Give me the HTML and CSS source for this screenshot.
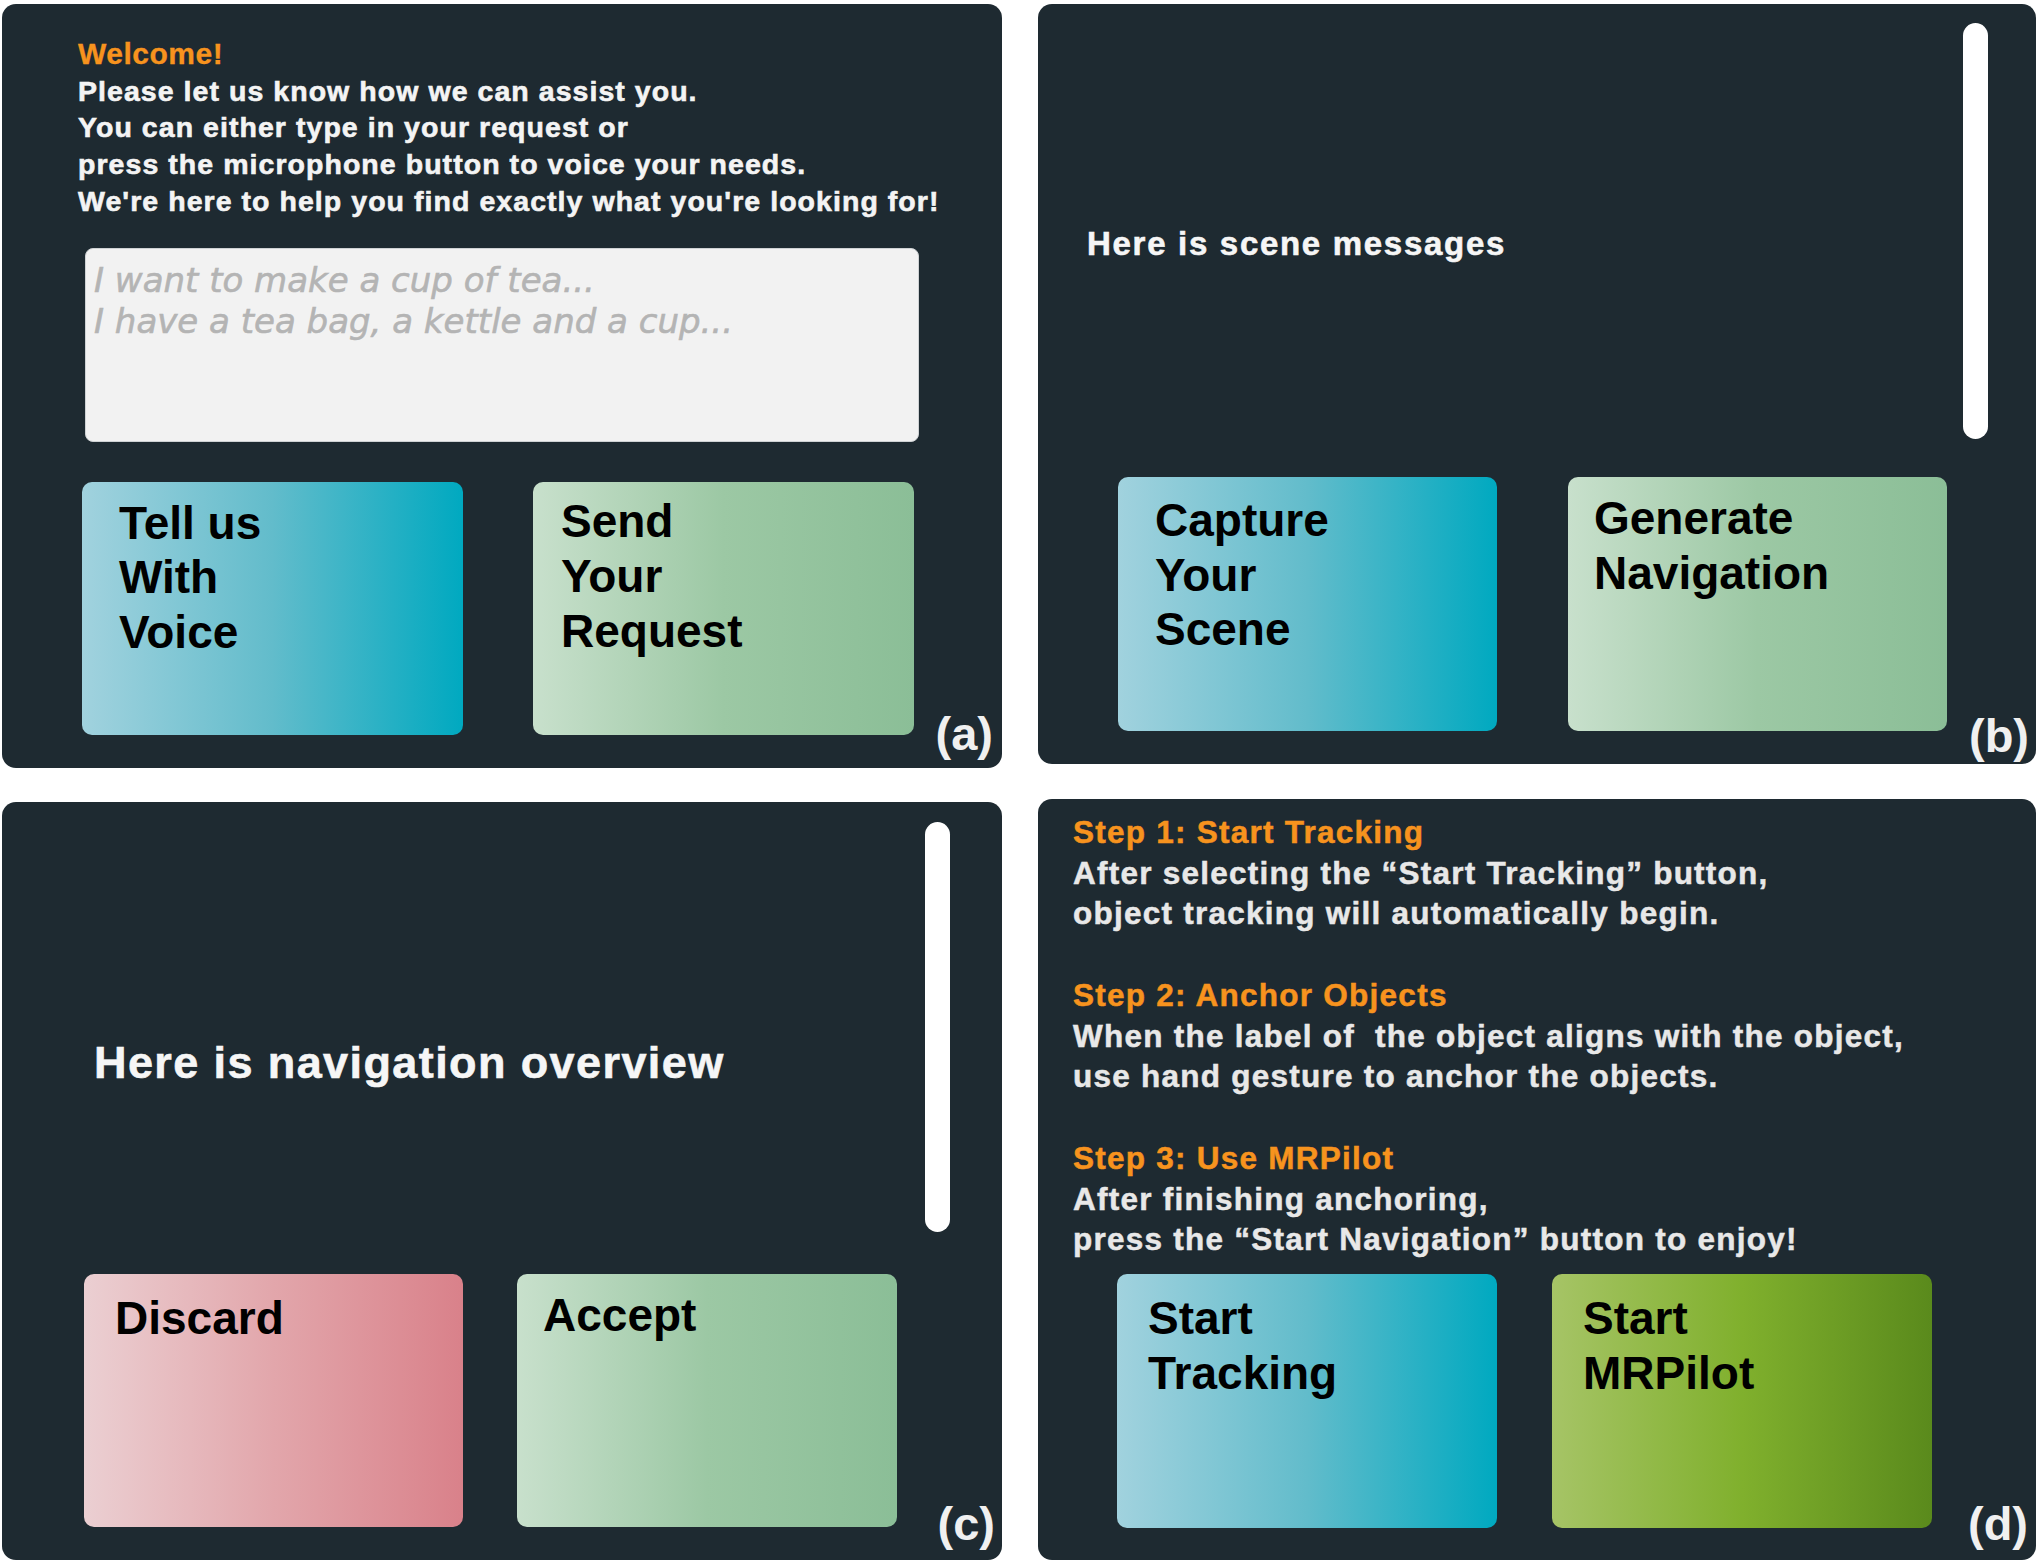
FILE: index.html
```html
<!DOCTYPE html>
<html lang="en">
<head>
<meta charset="utf-8">
<title>MRPilot panels</title>
<link rel="stylesheet" href="styles.css">
</head>
<body>
<div class="board">
  <div class="col col-left">
    <section class="panel panel-a">
      <div class="welcome">Welcome!</div>
      <div class="intro">Please let us know how we can assist you.<br>You can either type in your request or<br>press the microphone button to voice your needs.<br>We're here to help you find exactly what you're looking for!</div>
      <div class="request-box">
        <div class="placeholder">I want to make a cup of tea...<br>I have a tea bag, a kettle and a cup...</div>
      </div>
      <div class="btn-row row-a">
        <div class="btn btn-cyan voice">Tell us<br>With<br>Voice</div>
        <div class="btn btn-mint send">Send<br>Your<br>Request</div>
      </div>
      <span class="tag tag-a">(a)</span>
    </section>
    <section class="panel panel-c">
      <div class="top-row top-c">
        <div class="message msg-c">Here is navigation overview</div>
        <div class="scrollbar"></div>
      </div>
      <div class="btn-row row-c">
        <div class="btn btn-rose discard">Discard</div>
        <div class="btn btn-mint accept">Accept</div>
      </div>
      <span class="tag tag-c">(c)</span>
    </section>
  </div>
  <div class="col col-right">
    <section class="panel panel-b">
      <div class="top-row top-b">
        <div class="message msg-b">Here is scene messages</div>
        <div class="scrollbar"></div>
      </div>
      <div class="btn-row row-b">
        <div class="btn btn-cyan capture">Capture<br>Your<br>Scene</div>
        <div class="btn btn-mint generate">Generate<br>Navigation</div>
      </div>
      <span class="tag tag-b">(b)</span>
    </section>
    <section class="panel panel-d">
      <div class="steps">
        <div class="step-title">Step 1: Start Tracking</div>
        <div class="step-text">After selecting the “Start Tracking” button,<br>object tracking will automatically begin.</div>
        <div class="step-gap"></div>
        <div class="step-title">Step 2: Anchor Objects</div>
        <div class="step-text">When the label of&nbsp; the object aligns with the object,<br>use hand gesture to anchor the objects.</div>
        <div class="step-gap"></div>
        <div class="step-title">Step 3: Use MRPilot</div>
        <div class="step-text">After finishing anchoring,<br>press the “Start Navigation” button to enjoy!</div>
      </div>
      <div class="btn-row row-d">
        <div class="btn btn-cyan tracking">Start<br>Tracking</div>
        <div class="btn btn-olive pilot">Start<br>MRPilot</div>
      </div>
      <span class="tag tag-d">(d)</span>
    </section>
  </div>
</div>
</body>
</html>
```

FILE: styles.css
```css
html, body {
  margin: 0;
  padding: 0;
  background: #ffffff;
}

body {
  font-family: "Liberation Sans", Arial, sans-serif;
}

.board {
  display: flex;
  gap: 36px;
  padding: 4px 0 0 2px;
}

.col {
  display: flex;
  flex-direction: column;
}

.col-left {
  width: 1000px;
  gap: 34px;
}

.col-right {
  width: 998px;
  gap: 35px;
}

.panel {
  position: relative;
  background: #1e2a31;
  border-radius: 14px;
  box-sizing: border-box;
  overflow: hidden;
}

.panel-a { height: 764px; padding-top: 32px; }
.panel-c { height: 758px; padding-top: 20px; }
.panel-b { height: 760px; padding-top: 19px; }
.panel-d { height: 761px; padding-top: 13px; }

/* ---------- panel (a) ---------- */
.welcome {
  margin-left: 76px;
  font-size: 30px;
  line-height: 36.7px;
  font-weight: bold;
  letter-spacing: 0.5px;
  color: #f7931e;
  -webkit-text-stroke: 0.3px #f7931e;
}

.intro {
  margin-left: 76px;
  font-size: 28.5px;
  line-height: 36.7px;
  font-weight: bold;
  letter-spacing: 1.05px;
  color: #f4f4f4;
  -webkit-text-stroke: 0.6px #f4f4f4;
  white-space: nowrap;
}

.request-box {
  margin: 28px 0 0 83px;
  width: 834px;
  height: 194px;
  box-sizing: border-box;
  padding: 11px 8px;
  background: #f2f2f2;
  border: 1px solid #cfd2d4;
  border-radius: 8px;
}

.placeholder {
  font-family: "DejaVu Sans", "Liberation Sans", sans-serif;
  font-style: oblique;
  font-size: 34px;
  line-height: 41.5px;
  color: #b4b4b4;
  -webkit-text-stroke: 0.6px #b4b4b4;
  white-space: nowrap;
}

/* ---------- buttons ---------- */
.btn-row {
  display: flex;
}

.btn {
  box-sizing: border-box;
  border-radius: 10px;
  font-size: 46px;
  font-weight: bold;
  line-height: 54.5px;
  color: #000000;
  white-space: nowrap;
}

.btn-cyan  { background: linear-gradient(90deg, #a1d2de 0%, #62bccb 50%, #00a9c0 100%); }
.btn-mint  { background: linear-gradient(90deg, #c8e0cc 0%, #9cc8a4 50%, #8bbe97 100%); }
.btn-rose  { background: linear-gradient(90deg, #ebcfd2 0%, #e2a6ab 50%, #d9818a 100%); }
.btn-olive { background: linear-gradient(90deg, #a6c466 0%, #80b02d 50%, #5a8a1c 100%); }

.row-a { margin: 40px 0 0 80px; gap: 70px; }
.row-a .btn { height: 253px; width: 381px; }
.voice { padding: 14px 0 0 37px; }
.send { padding: 12px 0 0 28px; line-height: 55px; }

.row-b { margin: 38px 0 0 80px; gap: 71px; }
.row-b .btn { height: 254px; width: 379px; }
.capture { padding: 16px 0 0 37px; }
.generate { padding: 14px 0 0 26px; line-height: 55px; }

.row-c { margin: 42px 0 0 82px; gap: 54px; }
.row-c .btn { height: 253px; }
.discard { width: 379px; padding: 17px 0 0 31px; }
.accept { width: 380px; padding: 14px 0 0 26px; }

.row-d { margin: 14px 0 0 79px; gap: 55px; }
.row-d .btn { height: 254px; width: 380px; padding: 17px 0 0 31px; line-height: 55px; }

/* ---------- message panels ---------- */
.top-row {
  display: flex;
  align-items: flex-start;
}

.message {
  flex: 1;
  font-weight: bold;
  color: #f6f6f6;
  -webkit-text-stroke: 0.6px #f6f6f6;
  white-space: nowrap;
}

.msg-b {
  padding: 201px 0 0 49px;
  font-size: 33px;
  line-height: 40px;
  letter-spacing: 1.7px;
}

.msg-c {
  padding: 215px 0 0 92px;
  font-size: 45px;
  line-height: 52px;
  letter-spacing: 1.4px;
}

.scrollbar {
  width: 25px;
  border-radius: 13px;
  background: #ffffff;
}

.top-b .scrollbar { height: 416px; margin-right: 48px; }
.top-c .scrollbar { height: 410px; margin-right: 52px; }

/* ---------- panel (d) ---------- */
.steps {
  margin-left: 35px;
  font-size: 31.5px;
  line-height: 40.74px;
  font-weight: bold;
  letter-spacing: 1.25px;
  white-space: nowrap;
}

.step-title { color: #f7931e; -webkit-text-stroke: 0.5px #f7931e; }
.step-text { color: #e8e8e8; -webkit-text-stroke: 0.5px #e8e8e8; }
.step-gap { height: 40.74px; }

/* ---------- figure tags ---------- */
.tag {
  position: absolute;
  font-size: 47px;
  line-height: 47px;
  font-weight: bold;
  color: #f0f0f0;
}

.tag-a { right: 9px; bottom: 11px; }
.tag-b { right: 7px; bottom: 5px; }
.tag-c { right: 7px; bottom: 13px; }
.tag-d { right: 8px; bottom: 13px; }
```
